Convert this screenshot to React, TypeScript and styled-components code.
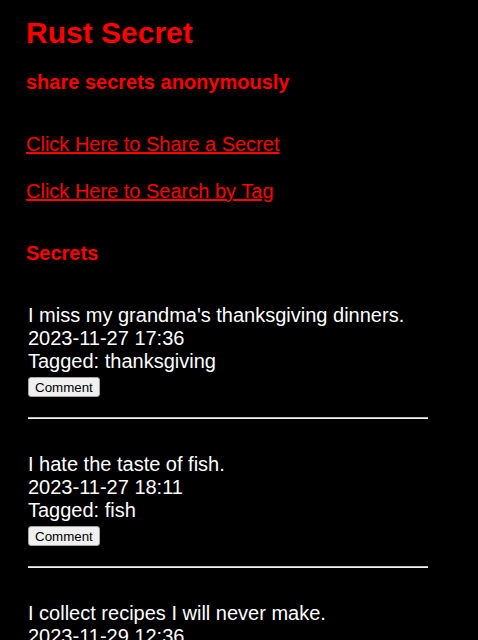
import React from 'react';
import styled, { createGlobalStyle } from 'styled-components';

interface Secret {
  id: number;
  text: string;
  created: string;
  tag: string;
}

const secrets: Secret[] = [
  { id: 1, text: "I miss my grandma's thanksgiving dinners.", created: '2023-11-27 17:36', tag: 'thanksgiving' },
  { id: 2, text: 'I hate the taste of fish.', created: '2023-11-27 18:11', tag: 'fish' },
  { id: 3, text: 'I collect recipes I will never make.', created: '2023-11-29 12:36', tag: 'cooking' },
];

const GlobalStyle = createGlobalStyle`
  html, body {
    margin: 0;
    background: #000;
    color: #fff;
    font-family: "Liberation Sans", Arial, Helvetica, sans-serif;
  }
`;

export default function App() {
  return (
    <>
      <GlobalStyle />
      <Page>
        <Title>Rust Secret</Title>
        <Tagline>share secrets anonymously</Tagline>
        <NavLink href="#" $gap={39}>Click Here to Share a Secret</NavLink>
        <NavLink href="#" $gap={24}>Click Here to Search by Tag</NavLink>
        <SectionTitle>Secrets</SectionTitle>
        <SecretList>
          {secrets.map(secret => (
            <SecretItem key={secret.id}>
              <SecretLine>{secret.text}</SecretLine>
              <SecretLine>{secret.created}</SecretLine>
              <SecretLine>Tagged: {secret.tag}</SecretLine>
              <CommentButton type="button">Comment</CommentButton>
              <Divider />
            </SecretItem>
          ))}
        </SecretList>
      </Page>
    </>
  );
}

const Page = styled.div`
  display: flex;
  flex-direction: column;
  align-items: flex-start;
  padding: 16px 26px 0;
  height: 640px;
  box-sizing: border-box;
  overflow: hidden;
`;

const Title = styled.h1`
  margin: 0;
  font-size: 30px;
  line-height: 34px;
  font-weight: 700;
  color: #ff0000;
`;

const Tagline = styled.h3`
  margin: 21px 0 0;
  font-size: 20px;
  line-height: 23px;
  font-weight: 700;
  color: #ff0000;
`;

const NavLink = styled.a<{ $gap: number }>`
  margin-top: ${p => p.$gap}px;
  font-size: 20px;
  line-height: 23px;
  color: #ff0000;
  text-decoration: underline;
`;

const SectionTitle = styled.h2`
  margin: 39px 0 0;
  font-size: 20px;
  line-height: 23px;
  font-weight: 700;
  color: #ff0000;
`;

const SecretList = styled.div`
  display: flex;
  flex-direction: column;
  gap: 34px;
  margin: 39px 0 0 2px;
`;

const SecretItem = styled.div`
  display: flex;
  flex-direction: column;
  align-items: flex-start;
`;

const SecretLine = styled.div`
  font-size: 20px;
  line-height: 23px;
  color: #fff;
`;

const CommentButton = styled.button`
  margin-top: 4px;
  height: 20px;
  padding: 0 6px;
  font-family: "Liberation Sans", Arial, sans-serif;
  font-size: 13.33px;
  color: #000;
  background: #f0f0f0;
  border: 1px solid #a3a3a3;
  border-radius: 3px;
`;

const Divider = styled.hr`
  width: 400px;
  margin: 20px 0 0;
  border: none;
  border-top: 1px solid #bdbdbd;
  border-bottom: 1px solid #f2f2f2;
`;
